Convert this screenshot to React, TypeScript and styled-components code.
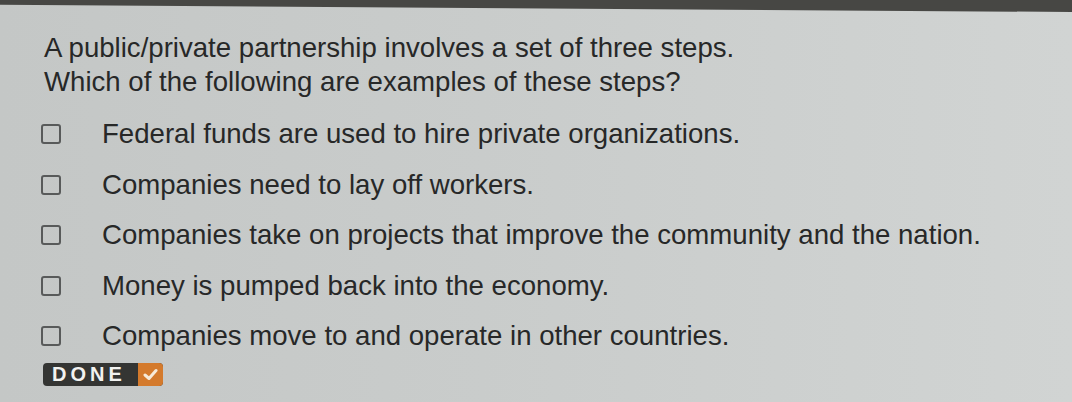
import React from 'react';
import styled, { createGlobalStyle } from 'styled-components';

const GlobalStyle = createGlobalStyle`
  html, body {
    margin: 0;
    padding: 0;
  }
  body {
    width: 1072px;
    height: 402px;
    overflow: hidden;
    background: #c8cbca;
    font-family: 'Liberation Sans', Arial, sans-serif;
    color: #272828;
  }
`;

const options = [
  'Federal funds are used to hire private organizations.',
  'Companies need to lay off workers.',
  'Companies take on projects that improve the community and the nation.',
  'Money is pumped back into the economy.',
  'Companies move to and operate in other countries.',
];

const Screen = styled.div`
  width: 1072px;
  height: 402px;
  display: flex;
  flex-direction: column;
  background: linear-gradient(90deg, #c4c7c6 0%, #c9cccb 45%, #d1d4d3 100%);
`;

// bezel edge, thinner at the left (photo taken at a slight angle)
const TopBar = styled.div`
  height: 12px;
  background: #474744;
  flex-shrink: 0;
  clip-path: polygon(0 0, 100% 0, 100% 100%, 0 40%);
`;

const Content = styled.div`
  padding: 19px 0 0 44px;
  display: flex;
  flex-direction: column;
`;

const Prompt = styled.p`
  margin: 0;
  font-size: 27.6px;
  line-height: 34px;
`;

const OptionList = styled.ul`
  list-style: none;
  margin: 18px 0 0;
  padding: 0;
  display: flex;
  flex-direction: column;
  gap: 16.5px;
`;

const Option = styled.li`
  display: flex;
  align-items: center;
  height: 34px;
  font-size: 27.6px;
`;

const Box = styled.span`
  box-sizing: border-box;
  width: 20px;
  height: 20px;
  border: 2px solid #585a5a;
  border-radius: 3px;
  margin: 0 41px 0 -3px;
  flex-shrink: 0;
`;

const DoneButton = styled.button`
  margin: 10px 0 0 -1px;
  align-self: flex-start;
  display: flex;
  height: 23px;
  padding: 0;
  border: none;
  border-radius: 4px;
  overflow: hidden;
  background: #343533;
  cursor: pointer;
`;

const DoneLabel = styled.span`
  display: flex;
  align-items: center;
  width: 86px;
  padding-left: 9px;
  font-family: 'Liberation Sans', Arial, sans-serif;
  font-weight: bold;
  font-size: 20px;
  letter-spacing: 4px;
  color: #f2f2f0;
`;

const DoneCheck = styled.span`
  display: flex;
  align-items: center;
  justify-content: center;
  width: 25px;
  background: #d47a2c;
`;

export default function App() {
  return (
    <>
      <GlobalStyle />
      <Screen>
        <TopBar />
        <Content>
          <Prompt>
            A public/private partnership involves a set of three steps.
            <br />
            Which of the following are examples of these steps?
          </Prompt>
          <OptionList>
            {options.map((text) => (
              <Option key={text}>
                <Box />
                {text}
              </Option>
            ))}
          </OptionList>
          <DoneButton>
            <DoneLabel>DONE</DoneLabel>
            <DoneCheck>
              <svg width="15" height="13" viewBox="0 0 15 13">
                <path d="M2 7 L6 10.5 L13 2.5" fill="none" stroke="#f7ead8" strokeWidth="3" strokeLinecap="round" strokeLinejoin="round" />
              </svg>
            </DoneCheck>
          </DoneButton>
        </Content>
      </Screen>
    </>
  );
}
